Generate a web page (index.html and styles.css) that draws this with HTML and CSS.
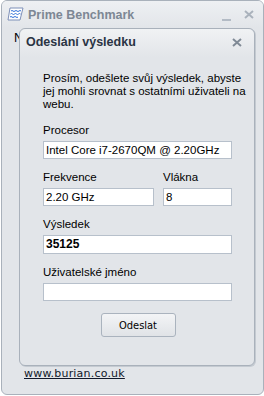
FILE: index.html
```html
<!DOCTYPE html>
<html lang="cs">
<head>
    <meta charset="UTF-8">
    <meta name="viewport" content="width=device-width, initial-scale=1.0">
    <title>Prime Benchmark</title>
    <link rel="stylesheet" href="styles.css">
</head>
<body>
    <div class="window">
        <!-- Main window title bar -->
        <div class="title-bar">
            <svg class="app-icon" width="17" height="14" viewBox="0 0 17 14">
                <path d="M3 1 L16 1 L13 13 L1 13 Z" fill="#fff" stroke="#7d8fb8" stroke-width="1"/>
                <path d="M4 4 q1 -1 2 0 t2 0 t2 0 t2 0 t2 0" fill="none" stroke="#2f6fd8" stroke-width="1"/>
                <path d="M3.5 7 q1 -1 2 0 t2 0 t2 0 t2 0 t2 0" fill="none" stroke="#2f6fd8" stroke-width="1"/>
                <path d="M3 10 q1 -1 2 0 t2 0 t2 0 t2 0" fill="none" stroke="#2f6fd8" stroke-width="1"/>
            </svg>
            <span class="title">Prime Benchmark</span>
            <svg class="win-btn minimize" width="9" height="10" viewBox="0 0 9 10">
                <rect x="0" y="8" width="9" height="2" fill="#b3bbc5"/>
            </svg>
            <svg class="win-btn" width="10" height="9" viewBox="0 0 10 9">
                <path d="M1 1 L9 8 M9 1 L1 8" stroke="#aab2bc" stroke-width="2"/>
            </svg>
        </div>
        <div class="window-body">
            <span class="hidden-label">N</span>
            <a class="site-link" href="#">www.burian.co.uk</a>
        </div>

        <!-- Submit result dialog -->
        <div class="dialog">
            <div class="dialog-title">
                <span>Odeslání výsledku</span>
                <svg width="10" height="9" viewBox="0 0 10 9">
                    <path d="M1 1 L9 8 M9 1 L1 8" stroke="#808a96" stroke-width="2"/>
                </svg>
            </div>
            <div class="dialog-body">
                <p class="intro">Prosím, odešlete svůj výsledek, abyste<br>jej mohli srovnat s ostatními uživateli na<br>webu.</p>

                <label class="field-label">Procesor</label>
                <div class="field">Intel Core i7-2670QM @ 2.20GHz</div>

                <div class="row">
                    <div class="col wide">
                        <label class="field-label">Frekvence</label>
                        <div class="field">2.20 GHz</div>
                    </div>
                    <div class="col narrow">
                        <label class="field-label">Vlákna</label>
                        <div class="field">8</div>
                    </div>
                </div>

                <label class="field-label">Výsledek</label>
                <div class="field bold">35125</div>

                <label class="field-label">Uživatelské jméno</label>
                <div class="field"></div>

                <div class="actions">
                    <button class="send-button">Odeslat</button>
                </div>
            </div>
        </div>
    </div>
</body>
</html>
```

FILE: styles.css
```css
body {
    margin: 0;
    background-color: #ffffff;
    font-family: "Liberation Sans", Arial, sans-serif;
    font-size: 11.5px;
    color: #000;
}

.window {
    position: relative;
    width: 261px;
    height: 393px;
    margin-left: 1px;
    border: 1px solid #a9b1bb;
    border-radius: 6px;
    background-color: #e2e5e9;
    display: flex;
    flex-direction: column;
    overflow: hidden;
}

.title-bar {
    height: 27px;
    display: flex;
    align-items: center;
    padding: 0 9px 0 5px;
    background: linear-gradient(#eef0f3, #e2e5e9);
}

.app-icon {
    margin-right: 4px;
    margin-top: -1px;
}

.title {
    flex: 1;
    font-weight: bold;
    font-size: 12.5px;
    color: #7d8794;
}

.minimize {
    margin-right: 13px;
    margin-top: 3px;
}

.window-body {
    flex: 1;
    display: flex;
    flex-direction: column;
    justify-content: space-between;
    padding: 0 0 14px 12px;
}

.hidden-label {
    font-size: 13px;
    margin-top: 2px;
}

.site-link {
    margin-left: 10px;
    font-family: "DejaVu Sans", sans-serif;
    font-size: 11px;
    letter-spacing: 0.2px;
    color: #10182a;
    text-decoration: underline;
}

.dialog {
    position: absolute;
    top: 27px;
    left: 17px;
    width: 234px;
    height: 336px;
    border: 1px solid #a9b1bb;
    border-radius: 6px;
    background-color: #e2e5e9;
    box-shadow: 1px 1px 0 #c4cad1;
}

.dialog-title {
    height: 26px;
    display: flex;
    align-items: center;
    justify-content: space-between;
    padding: 0 12px 2px 6px;
    border-radius: 6px 6px 0 0;
    background: linear-gradient(#f0f2f4, #e2e5e9);
    font-weight: bold;
    font-size: 12.5px;
    color: #2a3444;
}

.dialog-body {
    padding: 15px 22px 0 23px;
}

.intro {
    margin: 0 0 13px 0;
    line-height: 13px;
    white-space: nowrap;
}

.field-label {
    display: block;
    line-height: 13px;
    margin-bottom: 4px;
}

.field {
    height: 16px;
    line-height: 16px;
    padding: 0 2px;
    background: #fff;
    border: 1px solid #b7c0cb;
    margin-bottom: 12px;
    white-space: nowrap;
}

.field.bold {
    font-weight: bold;
    font-size: 12px;
    height: 17px;
    line-height: 17px;
}

.row {
    display: flex;
    gap: 9px;
}

.col.wide {
    width: 111px;
}

.col.narrow {
    flex: 1;
}

.actions {
    display: flex;
    justify-content: center;
    margin-top: 10px;
}

.send-button {
    width: 75px;
    height: 24px;
    margin-left: 1px;
    border: 1px solid #aab3be;
    border-radius: 3px;
    background: linear-gradient(#f3f4f6, #e0e3e7);
    font-family: "DejaVu Sans Condensed", sans-serif;
    font-size: 11px;
    color: #000;
}
```
